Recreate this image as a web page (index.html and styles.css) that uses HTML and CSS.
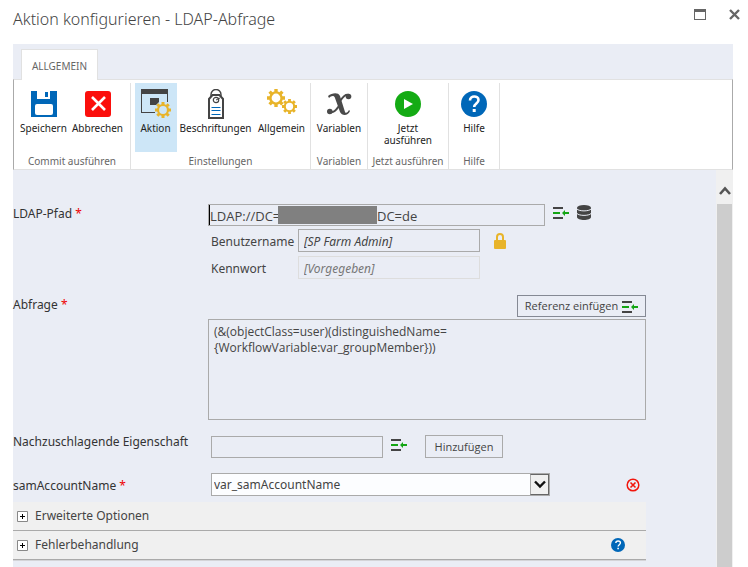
FILE: index.html
```html
<!DOCTYPE html>
<html lang="de">
<head>
<meta charset="utf-8">
<title>Aktion konfigurieren - LDAP-Abfrage</title>
<link rel="stylesheet" href="styles.css">
</head>
<body>
<svg class="defs" aria-hidden="true">
  <symbol id="insert" viewBox="0 0 16 13"><path fill="#444" d="M0 0h10v2H0zM0 10h10v2H0z"/><path fill="#14a514" d="M0 5h7v2H0zM9 6l3-3v2h4v2h-4v2z"/></symbol>
  <symbol id="gear" viewBox="0 0 16 16"><circle cx="8" cy="8" r="5" fill="none" stroke="#e8b42a" stroke-width="2.200"/><path stroke="#e8b42a" stroke-width="3" d="M8 0v3M8 13v3M0 8h3M13 8h3M2.300 2.300l2 2M11.700 11.700l2 2M2.300 13.700l2-2M11.700 4.300l2-2"/></symbol>
  <symbol id="help" viewBox="0 0 26 26"><circle cx="13" cy="13" r="13" fill="#0067b8"/><path fill="none" stroke="#fff" stroke-width="2.600" d="M9 9.500c0-5.500 8.500-5 8.500-.5 0 3.500-4.300 3.500-4.300 7"/><path fill="#fff" d="M11.700 18h3v3h-3z"/></symbol>
</svg>
<main class="dialog">
  <header class="titlebar">
    <h1>Aktion konfigurieren - LDAP-Abfrage</h1>
    <div class="window-buttons">
      <button aria-label="Maximieren"><svg width="12" height="11"><path fill="#666" d="M0 0h12v11H0zM1 3v7h10V3z" fill-rule="evenodd"/></svg></button>
      <button aria-label="Schließen"><svg width="11" height="11"><path stroke="#666" stroke-width="2.400" d="M1 1l9 9M10 1l-9 9"/></svg></button>
    </div>
  </header>
  <nav class="tabs"><a class="tab" href="#ribbon">ALLGEMEIN</a></nav>
  <div class="ribbon" id="ribbon">
    <section class="group commit">
      <div class="tools">
        <button class="tool"><svg width="26" height="26"><path fill="#0067b8" d="M0 0h6v8h13V0h7v26H0z"/><path fill="#fff" d="M6 0h13v6l-2 2H8L6 6z"/><path fill="#0067b8" d="M14 1h3v5h-3z"/><rect x="4" y="13" width="18" height="11" rx="2" fill="#fff"/></svg>Speichern</button>
        <button class="tool"><svg width="26" height="26"><rect x="0" y="0" width="26" height="26" rx="3" fill="#fb0f0c"/><path stroke="#fff" stroke-width="2.600" d="M7 6l13 13M20 6L7 19"/></svg>Abbrechen</button>
      </div>
      <h2>Commit ausführen</h2>
    </section>
    <section class="group settings">
      <div class="tools">
        <button class="tool active"><svg width="30" height="30" viewBox="0 0 30 30"><path fill="#444" d="M0 0h27v5H0zM0 5h1v19H0zM0 23h14v1H0zM26 5h1v8h-1zM9 9h9v4l-3 3H9z"/><use href="#gear" x="14" y="13" width="16" height="16"/></svg>Aktion</button>
        <button class="tool"><svg width="18" height="30"><path fill="none" stroke="#444" stroke-width="2" d="M2 29V10l3.500-4h7L16 10v19z"/><path fill="none" stroke="#444" stroke-width="1.400" d="M4 7V5.500a5 5 0 0 1 10 0V7"/><circle cx="9" cy="11" r="2.700" fill="none" stroke="#444" stroke-width="1.200"/><path stroke="#444" d="M9 11l4-2"/><path stroke="#0067b8" d="M4.500 18.500h9M4.500 21.500h9M4.500 25.500h9"/></svg>Beschriftungen</button>
        <button class="tool"><svg width="30" height="26"><use href="#gear" width="18" height="18"/><use href="#gear" x="15" y="10" width="15" height="15"/></svg>Allgemein</button>
      </div>
      <h2>Einstellungen</h2>
    </section>
    <section class="group variables">
      <div class="tools"><button class="tool"><svg width="26" height="26"><path fill="#4a4a4a" d="M2 5C6 2 12 1 14 5l5 16c1 2 3 0 4-2l1 1c-2 5-8 5-10 1L9 7C8 4 5 5 3 7z"/><path fill="none" stroke="#4a4a4a" stroke-width="2" d="M14 10c3-4 5-7 9-6M13 15c-3 4-5 7-9 6"/><circle cx="22.500" cy="5.500" r="2.800" fill="#4a4a4a"/><circle cx="3.800" cy="20.500" r="2.800" fill="#4a4a4a"/></svg>Variablen</button></div>
      <h2>Variablen</h2>
    </section>
    <section class="group run">
      <div class="tools"><button class="tool"><svg width="26" height="26"><circle cx="13" cy="13" r="13" fill="#14ab14"/><path fill="#fff" d="M9 8l9 5-9 5z"/></svg><span>Jetzt</span><span>ausführen</span></button></div>
      <h2>Jetzt ausführen</h2>
    </section>
    <section class="group help">
      <div class="tools"><button class="tool"><svg width="26" height="26"><use href="#help" width="26" height="26"/></svg>Hilfe</button></div>
      <h2>Hilfe</h2>
    </section>
  </div>
  <div class="viewport">
    <form class="form">
      <div class="row path">
        <label for="ldap">LDAP-Pfad <b>*</b></label>
        <div class="controls">
          <div class="field ldap"><input id="ldap" value="LDAP://DC="><span class="mask"></span><input aria-label="LDAP-Pfad, Ende" value="DC=de"></div>
          <button type="button" class="icon" aria-label="Referenz einfügen"><svg width="16" height="13"><use href="#insert"/></svg></button>
          <button type="button" class="icon" aria-label="Verzeichnis wählen"><svg width="14" height="15"><path fill="#444" d="M0 3v9c0 4 14 4 14 0V3z"/><ellipse cx="7" cy="2.800" rx="7" ry="2.800" fill="#444"/><path fill="none" stroke="#eaedf5" d="M0 4c2 2.500 12 2.500 14 0M0 8.500c2 2.500 12 2.500 14 0"/></svg></button>
        </div>
      </div>
      <div class="credentials">
        <label for="user">Benutzername</label>
        <input class="field" id="user" value="[SP Farm Admin]">
        <button type="button" class="icon" aria-label="Anmeldeinformationen"><svg width="12" height="16"><path fill="none" stroke="#e8b42a" stroke-width="2" d="M3 8V4a3 3 0 0 1 6 0v4"/><rect y="7" width="12" height="9" rx="1" fill="#e8b42a"/></svg></button>
        <label for="password">Kennwort</label>
        <input class="field" id="password" value="[Vorgegeben]" disabled>
      </div>
      <div class="row query">
        <label for="query">Abfrage <b>*</b></label>
        <div class="stack">
          <button type="button" class="button reference">Referenz einfügen <svg width="16" height="13"><use href="#insert"/></svg></button>
          <textarea class="field" id="query">(&amp;(objectClass=user)(distinguishedName=
{WorkflowVariable:var_groupMember}))</textarea>
        </div>
      </div>
      <div class="row property">
        <label for="property">Nachzuschlagende Eigenschaft</label>
        <div class="controls">
          <input class="field" id="property">
          <button type="button" class="icon" aria-label="Referenz einfügen"><svg width="16" height="13"><use href="#insert"/></svg></button>
          <button type="button" class="button add">Hinzufügen</button>
        </div>
      </div>
      <div class="row account">
        <label for="account">samAccountName <b>*</b></label>
        <div class="controls">
          <div class="select"><select id="account"><option>var_samAccountName</option></select><span class="arrow"><svg width="12" height="9"><path fill="none" stroke="#111" stroke-width="2.400" d="M1 1.500l5 5 5-5"/></svg></span></div>
          <button type="button" class="icon remove" aria-label="Entfernen"><svg width="14" height="14"><circle cx="7" cy="7" r="5.800" fill="none" stroke="#f2160d" stroke-width="1.500"/><path stroke="#f2160d" stroke-width="1.600" d="M4.500 4.500l5 5M9.500 4.500l-5 5"/></svg></button>
        </div>
      </div>
      <div class="expander"><button type="button"><svg width="11" height="11"><path fill="#fff" stroke="#888" d="M.5.500h10v10H.5z"/><path stroke="#000" d="M3 5.500h5M5.500 3v5"/></svg>Erweiterte Optionen</button></div>
      <div class="expander last"><button type="button"><svg width="11" height="11"><path fill="#fff" stroke="#888" d="M.5.500h10v10H.5z"/><path stroke="#000" d="M3 5.500h5M5.500 3v5"/></svg>Fehlerbehandlung</button><button type="button" class="icon" aria-label="Hilfe"><svg width="14" height="14"><use href="#help"/></svg></button></div>
    </form>
    <div class="scrollbar"><svg width="12" height="9"><path fill="none" stroke="#555" stroke-width="2.600" d="M1 8l5-5.500L11 8"/></svg><div class="thumb"></div></div>
  </div>
</main>
</body>
</html>
```

FILE: styles.css
```css
* { box-sizing: border-box; }
body { margin: 0; background: #fff; color: #444; font: 12px/16px "Noto Sans", sans-serif; }
button, input, textarea, select { margin: 0; padding: 0; border: 0; border-radius: 0; background: none; color: inherit; font: inherit; }
h1, h2 { margin: 0; font-weight: 400; }
svg { display: block; flex: none; }
.defs { position: absolute; width: 0; height: 0; }
.dialog { display: flex; flex-direction: column; height: 100vh; overflow: hidden; padding: 0 15px 0 13px; }
.titlebar { display: flex; justify-content: space-between; height: 44px; flex: none; }
h1 { padding-top: 7px; font: 300 16px/24px "Noto Sans", sans-serif; color: #444; }
.window-buttons { display: flex; align-items: flex-start; gap: 23px; padding-top: 9px; margin-right: -7px; }
.tabs { flex: none; height: 35px; padding: 5px 8px 0; background: #eaedf5; }
.tab { display: block; position: relative; z-index: 1; width: 77px; height: 31px; border: 1px solid #e1e1e1; border-bottom: 0; background: #fff; color: #666; font-size: 10px; line-height: 33px; text-align: center; text-decoration: none; }
.ribbon { display: flex; flex: none; height: 91px; border: 1px solid #e1e1e1; border-left-color: #aaa; border-right-color: #aaa; padding-top: 3px; }
.group { display: flex; flex-direction: column; border-right: 1px solid #e1e1e1; }
.commit { width: 117px; }
.settings { width: 180px; }
.variables { width: 57px; }
.run { width: 81px; }
.help { width: 51px; }
.tools { display: flex; justify-content: center; height: 69px; }
.commit .tools { padding-right: 3px; }
.settings .tools { padding-left: 2px; }
.group h2 { padding-top: 1px; color: #666; font-size: 10px; line-height: 16px; text-align: center; white-space: nowrap; }
.tool { display: flex; flex-direction: column; align-items: center; width: 54px; color: #222; font-size: 10px; line-height: 12px; white-space: nowrap; }
.tool svg { height: 30px; margin: 8px 0 1px; }
.tool.active { width: 42px; background: #cde6f7; }
.settings .tool svg { margin-top: 6px; margin-bottom: 3px; }
.settings .tool:nth-child(2) { width: 78px; }
.viewport { display: flex; flex: 1; min-height: 0; background: #eaedf5; }
.form { flex: 1; padding: 34px 70px 0 0; }
.row { display: flex; }
.row > label { width: 195px; flex: none; color: #333; }
b { color: #e00; font-weight: 400; }
.controls { display: flex; flex: 1; align-items: flex-start; }
.field { border: 1px solid #aaa; }
.path > label { padding-top: 2px; }
.ldap { display: flex; width: 337px; height: 22px; }
.ldap input { width: 69px; height: 20px; padding-top: 2px; font: 13px/18px "Open Sans", sans-serif; }
.ldap input:first-child { border-left: 1px solid #000; }
.mask { width: 99px; height: 18px; margin-top: 1px; background: #808080; }
.path .icon { margin: 3px 0 0 8px; }
.path .icon + .icon { margin-top: 1px; }
.credentials { display: grid; grid-template-columns: 87px 182px 12px; row-gap: 4px; padding: 3px 0 0 198px; align-items: center; }
.credentials label { padding-top: 2px; }
.credentials .field { height: 23px; padding: 1px 5px 0; font-style: italic; }
.credentials .icon { margin-left: 14px; }
#password { border-color: #ddd; color: #777; }
.query { padding-top: 16px; }
.query > label { padding-top: 2px; }
.stack { display: flex; flex: 1; flex-direction: column; align-items: flex-end; gap: 2px; }
.button { height: 23px; border: 1px solid #aaa; font-family: "Open Sans", sans-serif; font-size: 11px; }
.reference { display: flex; align-items: center; justify-content: center; gap: 4px; height: 22px; width: 129px; border-color: #858994; }
.reference svg { margin-top: 2px; }
textarea { display: block; width: 100%; height: 101px; padding: 4px 5px; resize: none; }
#query { font-family: "Open Sans", sans-serif; }
.property { padding-top: 15px; }
.property > label { margin-top: -1px; }
.property .controls, .account .controls { padding-left: 3px; }
.property .field { width: 172px; height: 22px; margin-top: 1px; }
.property .icon { margin: 4px 18px 0 8px; }
.add { width: 78px; }
.account { padding-top: 15px; }
.account > label { padding-top: 5px; }
.select { position: relative; width: 339px; height: 23px; border: 1px solid #aaa; background: #fcfdff; }
select { width: 100%; height: 21px; padding: 1px 20px 0 2px; appearance: none; }
.arrow { position: absolute; top: 0; right: 0; display: grid; place-items: center; width: 19px; height: 21px; border: 1px solid #666; border-left-color: #aaa; background: #f0f0f0; pointer-events: none; }
.remove { margin: 5px 6px 0 auto; }
.expander { display: flex; justify-content: space-between; align-items: center; height: 29px; padding: 0 21px 0 4px; border-bottom: 1px solid #aaa; background: #f0f0f0; }
.expander button { display: flex; align-items: center; gap: 7px; }
.account + .expander { margin-top: 6px; }
.last { box-shadow: 0 1px #d4d4d8; }
.scrollbar { display: flex; flex-direction: column; align-items: center; width: 17px; padding-top: 16px; background: #f0f0f0; }
.thumb { flex: 1; width: 15px; margin-top: 9px; background: #cdcdcd; }
```
